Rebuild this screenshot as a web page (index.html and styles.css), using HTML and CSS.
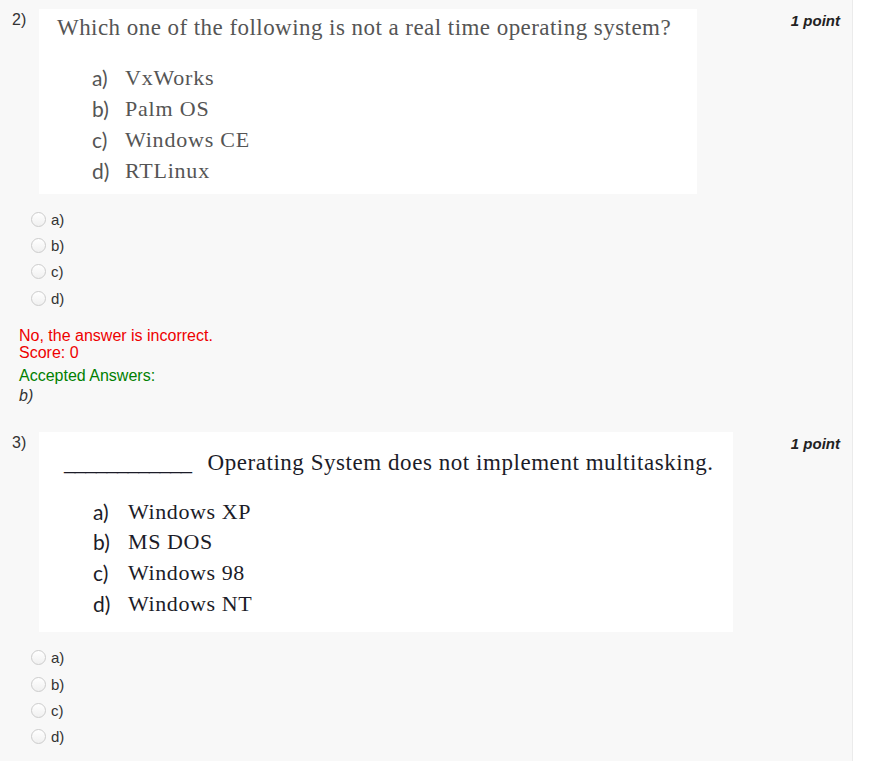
FILE: index.html
```html
<!DOCTYPE html>
<html>
<head>
<meta charset="utf-8">
<link rel="stylesheet" href="styles.css">
</head>
<body>
<div class="page">
  <div class="question q2">
    <div class="qhead">
      <div class="qnum">2)</div>
      <div class="figure fig2">
        <div class="ftitle">Which one of the following is not a real time operating system?</div>
        <ol class="fopts">
          <li><span class="flab">a)</span><span>VxWorks</span></li>
          <li><span class="flab">b)</span><span>Palm OS</span></li>
          <li><span class="flab">c)</span><span>Windows CE</span></li>
          <li><span class="flab">d)</span><span>RTLinux</span></li>
        </ol>
      </div>
      <div class="points">1 point</div>
    </div>
    <div class="choices">
      <div class="choice"><span class="radio"></span><span>a)</span></div>
      <div class="choice"><span class="radio"></span><span>b)</span></div>
      <div class="choice"><span class="radio"></span><span>c)</span></div>
      <div class="choice"><span class="radio"></span><span>d)</span></div>
    </div>
    <div class="feedback">
      <div class="wrong">No, the answer is incorrect.<br>Score: 0</div>
      <div class="accepted">Accepted Answers:</div>
      <div class="answer">b)</div>
    </div>
  </div>

  <div class="question q3">
    <div class="qhead">
      <div class="qnum">3)</div>
      <div class="figure fig3">
        <div class="ftitle"><span class="blank">____________</span> Operating System does not implement multitasking.</div>
        <ol class="fopts">
          <li><span class="flab">a)</span><span>Windows XP</span></li>
          <li><span class="flab">b)</span><span>MS DOS</span></li>
          <li><span class="flab">c)</span><span>Windows 98</span></li>
          <li><span class="flab">d)</span><span>Windows NT</span></li>
        </ol>
      </div>
      <div class="points">1 point</div>
    </div>
    <div class="choices">
      <div class="choice"><span class="radio"></span><span>a)</span></div>
      <div class="choice"><span class="radio"></span><span>b)</span></div>
      <div class="choice"><span class="radio"></span><span>c)</span></div>
      <div class="choice"><span class="radio"></span><span>d)</span></div>
    </div>
  </div>
</div>
</body>
</html>
```

FILE: styles.css
```css
html, body {
  margin: 0;
  padding: 0;
  background: #ffffff;
}
body {
  font-family: Arial, "Liberation Sans", sans-serif;
  color: #333333;
}
.page {
  width: 852px;
  height: 761px;
  background: #f8f8f8;
  border-right: 1px solid #ebebeb;
  overflow: hidden;
}
.question {
  padding: 9px 12px 0 12px;
}
.q3 {
  padding-top: 26px;
}
.qhead {
  display: flex;
  align-items: flex-start;
}
.qnum {
  width: 27px;
  font-size: 16px;
  line-height: 20px;
  margin-top: 1px;
  color: #333;
}
.figure {
  background: #ffffff;
  box-sizing: border-box;
  font-family: "Liberation Serif", "Times New Roman", serif;
}
.fig2 {
  width: 658px;
  height: 185px;
  padding: 4px 0 0 18px;
  color: #555555;
}
.fig3 {
  width: 694px;
  height: 200px;
  padding: 16px 0 0 25px;
  color: #1c1c28;
}
.ftitle {
  font-size: 23px;
  line-height: 30px;
  white-space: nowrap;
}
.fig2 .ftitle {
  letter-spacing: 0.45px;
}
.fig3 .ftitle {
  letter-spacing: 0.55px;
}
.blank {
  letter-spacing: -0.9px;
  margin-right: 10px;
}
.fopts {
  list-style: none;
  margin: 0;
  padding: 0;
  font-size: 22px;
}
.fig2 .fopts {
  margin: 19px 0 0 35px;
  line-height: 31px;
  letter-spacing: 0.8px;
}
.fig3 .fopts {
  margin: 19px 0 0 29px;
  line-height: 30.7px;
  letter-spacing: 0.6px;
}
.fopts li {
  display: flex;
  white-space: nowrap;
}
.flab {
  font-family: Lato, "Open Sans", sans-serif;
  font-size: 21px;
  width: 33px;
  letter-spacing: 0;
}
.fig3 .flab {
  width: 35px;
}
.points {
  flex: 1;
  text-align: right;
  font-weight: bold;
  font-style: italic;
  font-size: 15px;
  line-height: 20px;
  margin-top: 2px;
  color: #222;
}
.choices {
  margin: 12px 0 0 19px;
}
.q3 .choices {
  margin-top: 13px;
}
.choice {
  display: flex;
  align-items: center;
  height: 26.4px;
  font-size: 15px;
  color: #333;
}
.radio {
  width: 13px;
  height: 13px;
  border: 1px solid #cccccc;
  border-radius: 50%;
  background: linear-gradient(#ffffff, #f0f0f0);
  margin-right: 5px;
  box-sizing: content-box;
}
.feedback {
  margin: 15px 0 0 7px;
  font-size: 16px;
  line-height: 17px;
}
.wrong {
  color: #ee0000;
}
.accepted {
  color: #008000;
  margin-top: 6px;
  line-height: 18px;
}
.answer {
  font-style: italic;
  color: #333;
  line-height: 20px;
  margin-top: 1px;
}
```
